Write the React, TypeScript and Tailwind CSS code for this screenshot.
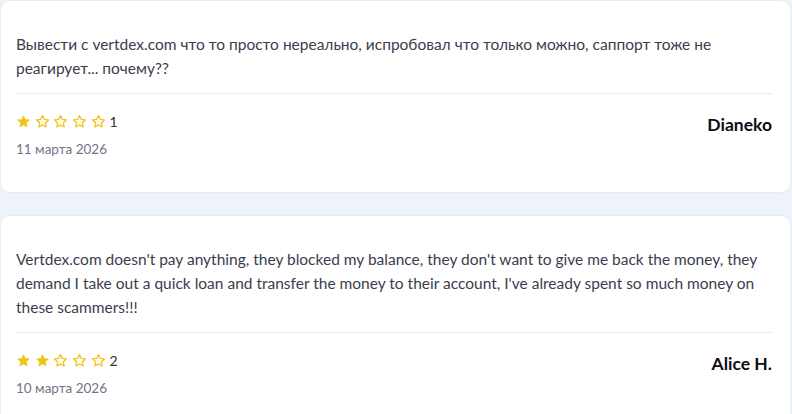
const reviews = [
  {
    id: 1,
    lines: [
      "Вывести с vertdex.com что то просто нереально, испробовал что только можно, саппорт тоже не",
      "реагирует... почему??",
    ],
    rating: 1,
    date: "11 марта 2026",
    author: "Dianeko",
  },
  {
    id: 2,
    lines: [
      "Vertdex.com doesn't pay anything, they blocked my balance, they don't want to give me back the money, they",
      "demand I take out a quick loan and transfer the money to their account, I've already spent so much money on",
      "these scammers!!!",
    ],
    rating: 2,
    date: "10 марта 2026",
    author: "Alice H.",
  },
];

const Star = ({ filled }: { filled: boolean }) => (
  <svg width="15" height="15" viewBox="0 0 24 24" className="shrink-0">
    <path
      d="M12 2.6l2.9 6.1 6.6.8-4.9 4.6 1.3 6.6L12 17.4l-5.9 3.3 1.3-6.6-4.9-4.6 6.6-.8z"
      fill={filled ? "#f2c416" : "none"}
      stroke="#f2c416"
      strokeWidth={filled ? 1 : 2}
      strokeLinejoin="round"
    />
  </svg>
);

export default function App() {
  return (
    <div
      className="min-h-screen bg-[#eef2fa] flex flex-col gap-[22px]"
      style={{ fontFamily: "Lato, 'Noto Sans', sans-serif" }}
    >
      {reviews.map((r) => (
        <div
          key={r.id}
          className="bg-white border border-[#e8ebf0] rounded-[10px] w-[791px] pl-[15px] pr-[18px] pt-[31px] pb-[33px]"
        >
          <p className="text-[15.5px] leading-6 text-[#3b3d4d] pb-[13px] border-b border-[#ececec]">
            {r.lines.map((l, i) => (
              <span key={i}>
                {l}
                {i < r.lines.length - 1 && <br />}
              </span>
            ))}
          </p>
          <div className="flex justify-between items-start pt-[17px]">
            <div>
              <div className="flex items-center gap-[3.7px]">
                {[1, 2, 3, 4, 5].map((n) => (
                  <Star key={n} filled={n <= r.rating} />
                ))}
                <span className="text-[14px] text-[#333]">{r.rating}</span>
              </div>
              <div className="text-[13.5px] text-[#717588] mt-[7px]">{r.date}</div>
            </div>
            <div className="text-[17.5px] font-bold text-[#0d0d12] mt-[1px]">{r.author}</div>
          </div>
        </div>
      ))}
    </div>
  );
}
